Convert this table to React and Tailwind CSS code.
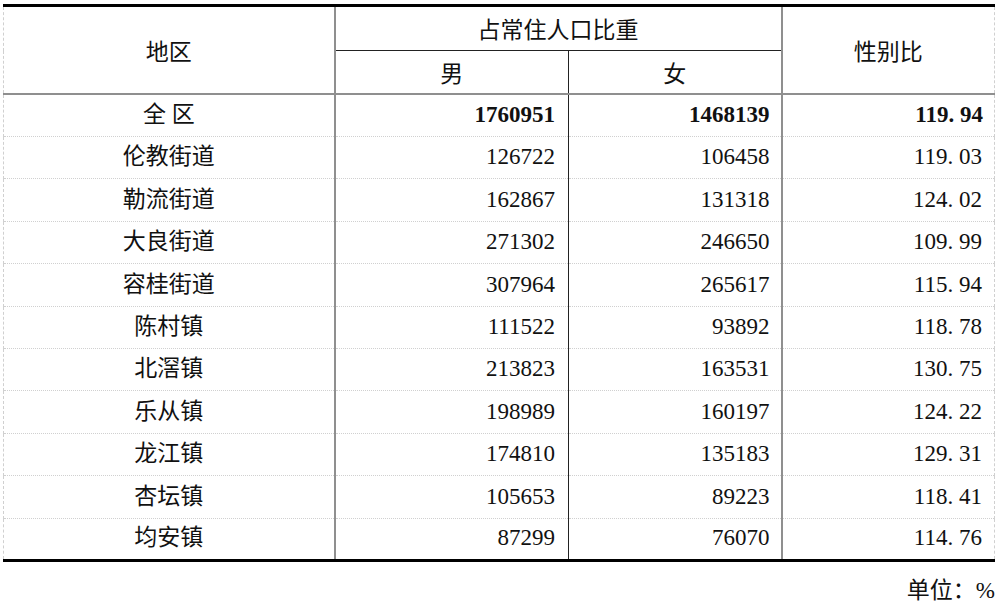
import React from "react";

const rows = [
  ["伦教街道", "126722", "106458", "119.03"],
  ["勒流街道", "162867", "131318", "124.02"],
  ["大良街道", "271302", "246650", "109.99"],
  ["容桂街道", "307964", "265617", "115.94"],
  ["陈村镇", "111522", "93892", "118.78"],
  ["北滘镇", "213823", "163531", "130.75"],
  ["乐从镇", "198989", "160197", "124.22"],
  ["龙江镇", "174810", "135183", "129.31"],
  ["杏坛镇", "105653", "89223", "118.41"],
  ["均安镇", "87299", "76070", "114.76"],
];

// SimSun-style half-width period
function Ratio({ value }) {
  const [a, b] = value.split(".");
  return (
    <span>
      {a}
      <span className="inline-block w-[0.5em] text-left">.</span>
      {b}
    </span>
  );
}

export default function App() {
  const dash = "[border-left-style:dashed] border-l border-l-[#d0d0d0]";
  const dashR = "[border-right-style:dashed] border-r border-r-[#d0d0d0]";
  const grey = "border-[#8f8f8f]";

  return (
    <div className="w-[1000px] h-[605px] bg-white pl-[3px] pt-[4px] text-[#111] font-['Liberation_Serif','Noto_Sans_CJK_SC',serif]">
      <table className="w-[991px] table-fixed border-collapse text-[23px]">
        <colgroup>
          <col className="w-[331px]" />
          <col className="w-[234px]" />
          <col className="w-[213px]" />
          <col className="w-[213px]" />
        </colgroup>
        <thead>
          <tr className="h-[45px]">
            <th
              rowSpan={2}
              className={`font-normal border-t-[3px] border-t-black ${dash} border-r-2 border-r-[#8f8f8f] border-b-2 border-b-[#8f8f8f] font-['Noto_Sans_CJK_SC',sans-serif]`}
            >
              地区
            </th>
            <th
              colSpan={2}
              className="font-normal border-t-[3px] border-t-black border-b border-b-[#222] font-['Noto_Sans_CJK_SC',sans-serif]"
            >
              占常住人口比重
            </th>
            <th
              rowSpan={2}
              className={`font-normal border-t-[3px] border-t-black border-l-2 border-l-[#8f8f8f] ${dashR} border-b-2 border-b-[#8f8f8f] font-['Noto_Sans_CJK_SC',sans-serif]`}
            >
              性别比
            </th>
          </tr>
          <tr className="h-[43px]">
            <th className={`font-normal border-b-2 ${grey} border-r border-r-[#222] font-['Noto_Sans_CJK_SC',sans-serif]`}>
              男
            </th>
            <th className={`font-normal border-b-2 ${grey} font-['Noto_Sans_CJK_SC',sans-serif]`}>
              女
            </th>
          </tr>
        </thead>
        <tbody>
          <tr className="h-[43px] font-bold">
            <td className={`text-center font-normal ${dash} border-r-2 border-r-[#8f8f8f] border-b border-b-[#d0d0d0] [border-bottom-style:dotted]`}>
              全&nbsp;区
            </td>
            <td className="text-right pr-[13px] border-r border-r-[#222] border-b border-b-[#d0d0d0] [border-bottom-style:dotted]">
              1760951
            </td>
            <td className="text-right pr-[11px] border-b border-b-[#d0d0d0] [border-bottom-style:dotted]">
              1468139
            </td>
            <td className={`text-right pr-[11px] border-l-2 border-l-[#8f8f8f] ${dashR} border-b border-b-[#d0d0d0] [border-bottom-style:dotted]`}>
              <Ratio value="119.94" />
            </td>
          </tr>
          {rows.map((r, i) => {
            const last = i === rows.length - 1;
            const bottom = last
              ? "border-b-[3px] border-b-black"
              : "border-b border-b-[#d0d0d0] [border-bottom-style:dotted]";
            return (
              <tr key={r[0]} className="h-[42.4px]">
                <td className={`text-center ${dash} border-r-2 border-r-[#8f8f8f] ${bottom}`}>
                  {r[0]}
                </td>
                <td className={`text-right pr-[13px] border-r border-r-[#222] ${bottom}`}>
                  {r[1]}
                </td>
                <td className={`text-right pr-[11px] ${bottom}`}>{r[2]}</td>
                <td className={`text-right pr-[12px] border-l-2 border-l-[#8f8f8f] ${dashR} ${bottom}`}>
                  <Ratio value={r[3]} />
                </td>
              </tr>
            );
          })}
        </tbody>
      </table>
      <div className="w-[992px] text-right text-[23px] mt-[17px] leading-none">
        单位：%
      </div>
    </div>
  );
}
